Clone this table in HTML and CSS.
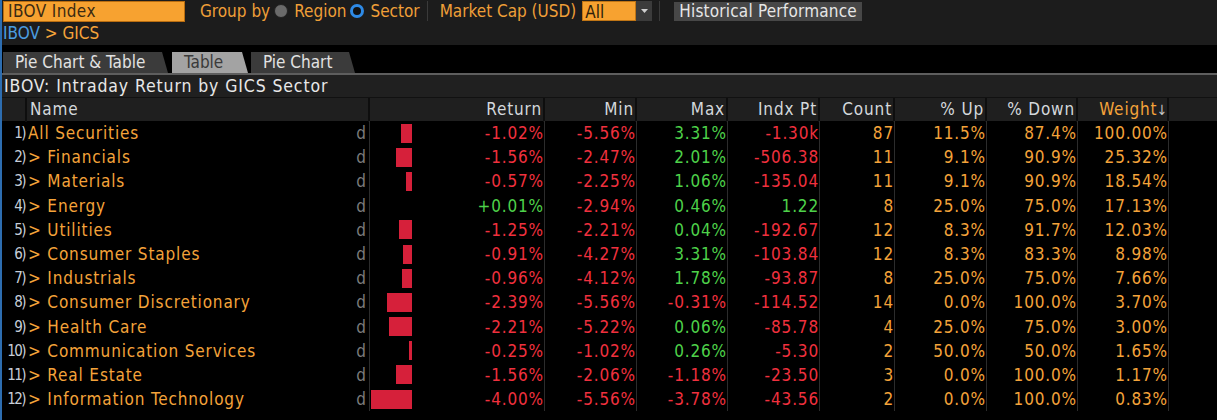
FILE: index.html
```html
<!DOCTYPE html>
<html>
<head>
<meta charset="utf-8">
<link rel="stylesheet" href="styles.css">
</head>
<body>
<div class="page">
  <div class="toolbar">
    <div class="ticker">IBOV Index</div>
    <span class="lbl grp">Group by</span>
    <span class="radio off"></span>
    <span class="lbl">Region</span>
    <span class="radio on"></span>
    <span class="lbl">Sector</span>
    <span class="vsep"></span>
    <span class="lbl">Market Cap (USD)</span>
    <span class="dd"><span class="ddv">All</span><span class="dda"><svg width="7" height="5" viewBox="0 0 7 5"><path d="M0 0h7L3.5 4z" fill="#cfcfcf"/></svg></span></span>
    <span class="vsep"></span>
    <span class="btn">Historical Performance</span>
  </div>
  <div class="crumb"><span class="blue">IBOV</span> <span class="org">&gt; GICS</span></div>
  <div class="band"></div>
  <div class="tabs">
    <div class="tab t1">Pie Chart &amp; Table</div>
    <div class="tab t2 active">Table</div>
    <div class="tab t3">Pie Chart</div>
  </div>
  <div class="title">IBOV: Intraday Return by GICS Sector</div>
  <div class="grid head">
    <div class="c"></div>
    <div class="c name">Name</div>
    <div class="c r">Return</div>
    <div class="c r">Min</div>
    <div class="c r">Max</div>
    <div class="c r">Indx Pt</div>
    <div class="c r">Count</div>
    <div class="c r">% Up</div>
    <div class="c r">% Down</div>
    <div class="c r wt">Weight<span class="arr">↓</span></div>
    <div class="c"></div>
  </div>
  <div class="body" id="rows"></div>
</div>
<script src="app.js"></script>
</body>
</html>
```
FILE: app.js
```js
var data = [
  ["1)","All Securities",false,-1.02,"-1.02%","-5.56%","3.31%","-1.30k","87","11.5%","87.4%","100.00%"],
  ["2)","Financials",true,-1.56,"-1.56%","-2.47%","2.01%","-506.38","11","9.1%","90.9%","25.32%"],
  ["3)","Materials",true,-0.57,"-0.57%","-2.25%","1.06%","-135.04","11","9.1%","90.9%","18.54%"],
  ["4)","Energy",true,0.01,"+0.01%","-2.94%","0.46%","1.22","8","25.0%","75.0%","17.13%"],
  ["5)","Utilities",true,-1.25,"-1.25%","-2.21%","0.04%","-192.67","12","8.3%","91.7%","12.03%"],
  ["6)","Consumer Staples",true,-0.91,"-0.91%","-4.27%","3.31%","-103.84","12","8.3%","83.3%","8.98%"],
  ["7)","Industrials",true,-0.96,"-0.96%","-4.12%","1.78%","-93.87","8","25.0%","75.0%","7.66%"],
  ["8)","Consumer Discretionary",true,-2.39,"-2.39%","-5.56%","-0.31%","-114.52","14","0.0%","100.0%","3.70%"],
  ["9)","Health Care",true,-2.21,"-2.21%","-5.22%","0.06%","-85.78","4","25.0%","75.0%","3.00%"],
  ["10)","Communication Services",true,-0.25,"-0.25%","-1.02%","0.26%","-5.30","2","50.0%","50.0%","1.65%"],
  ["11)","Real Estate",true,-1.56,"-1.56%","-2.06%","-1.18%","-23.50","3","0.0%","100.0%","1.17%"],
  ["12)","Information Technology",true,-4.00,"-4.00%","-5.56%","-3.78%","-43.56","2","0.0%","100.0%","0.83%"]
];
function cls(s){ return s.charAt(0) === "-" ? "neg" : "pos"; }
var html = "";
data.forEach(function(d){
  var w = Math.round(Math.abs(d[3]) * 10.3);
  if (Math.abs(d[3]) < 0.05) w = 0;
  html += '<div class="grid row">' +
    '<div class="c num">' + d[0] + '</div>' +
    '<div class="c name"><span class="nm">' + (d[2] ? '&gt; ' : '') + d[1] + '</span><span class="dch">d</span></div>' +
    '<div class="c ret"><span class="barbox"><span class="bar" style="width:' + w + 'px"></span></span><span class="v ' + cls(d[4]) + '">' + d[4] + '</span></div>' +
    '<div class="c r ' + cls(d[5]) + '">' + d[5] + '</div>' +
    '<div class="c r ' + cls(d[6]) + '">' + d[6] + '</div>' +
    '<div class="c r ' + cls(d[7]) + '">' + d[7] + '</div>' +
    '<div class="c r org">' + d[8] + '</div>' +
    '<div class="c r org">' + d[9] + '</div>' +
    '<div class="c r org">' + d[10] + '</div>' +
    '<div class="c r org">' + d[11] + '</div>' +
    '<div class="c last"></div>' +
    '</div>';
});
document.getElementById("rows").innerHTML = html;
```
FILE: styles.css
```css
html, body {
  margin: 0;
  padding: 0;
  background: #000;
  width: 1217px;
  height: 420px;
  overflow: hidden;
}
body {
  font-family: "DejaVu Sans Condensed", "DejaVu Sans", sans-serif;
  font-size: 17px;
  color: #f4a33a;
}
.page {
  border-left: 2px solid #2d6db0;
  height: 420px;
  box-sizing: border-box;
}
.toolbar {
  height: 22px;
  background: #1c1c1c;
  display: flex;
  align-items: center;
}
.ticker {
  margin-left: 1px;
  width: 176px;
  height: 19px;
  line-height: 19px;
  background: #f7a230;
  border: 1px solid #b96d10;
  color: #3b2a12;
  padding-left: 4px;
  box-sizing: content-box;
  letter-spacing: 0.4px;
}
.lbl { color: #ef9f38; white-space: nowrap; }
.grp { margin-left: 15px; }
.radio {
  width: 14px;
  height: 14px;
  border-radius: 50%;
  box-sizing: border-box;
  margin: 0 6px 0 4px;
}
.radio.off { background: #6a6a6a; border: 1px solid #222; }
.radio.on { background: #111; border: 3px solid #2e8ae6; }
.vsep {
  width: 1px;
  height: 20px;
  background: #3a3a3a;
  margin: 0 12px 0 7px;
}
.dd { display: flex; margin-left: 6px; height: 20px; }
.ddv {
  width: 54px;
  background: #f7a230;
  color: #2e1f0a;
  line-height: 20px;
  padding-left: 2px;
  border: 1px solid #c07515;
  box-sizing: border-box;
}
.dda {
  width: 16px;
  background: #3b3b3b;
  display: flex;
  align-items: center;
  justify-content: center;
}
.btn {
  margin-left: 2px;
  background: #474747;
  color: #e6e6e6;
  height: 19px;
  line-height: 19px;
  padding: 0 5px;
  white-space: nowrap;
  letter-spacing: 0.2px;
}
.crumb {
  height: 23px;
  line-height: 22px;
  background: #1c1c1c;
  padding-left: 1px;
}
.blue { color: #4b9de0; }
.org { color: #f4a33a; }
.band { height: 7px; background: #000; }
.tabs {
  height: 21px;
  display: flex;
  border-bottom: 2px solid #5e5e5e;
  background: #000;
}
.tab {
  height: 21px;
  line-height: 21px;
  background: #3b3b3b;
  color: #e2e2e2;
  clip-path: polygon(0 0, calc(100% - 6px) 0, 100% 100%, 0 100%);
  box-sizing: border-box;
}
.t1 { margin-left: 1px; width: 165px; padding-left: 12px; }
.t2 { margin-left: 4px; width: 76px; padding-left: 12px; }
.t3 { margin-left: 3px; width: 104px; padding-left: 12px; }
.tab.active { background: #a3a3a3; color: #3a3a3a; }
.title {
  height: 22px;
  line-height: 22px;
  background: #202020;
  color: #e8e8e8;
  padding-left: 2px;
  border-bottom: 1px solid #111;
  font-size: 17.5px;
  letter-spacing: 0.88px;
}
.grid {
  display: grid;
  grid-template-columns: 25px 343px 175px 92px 91px 92px 75px 92px 91px 91px 1fr;
  letter-spacing: 0.85px;
}
.head {
  height: 23px;
  background: #1f1f1f;
  color: #d4d8dc;
  line-height: 23px;
}
.head .c { border-right: 2px solid #0e0e0e; padding-right: 1px; }
.head .c:last-child { border-right: none; }
.head .name { padding-left: 3px; }
.r { text-align: right; }
.head .wt { color: #f4a33a; padding-right: 0; }
.arr { color: #c8c8c8; font-size: 14px; margin-left: -1px; letter-spacing: 0; }
.row {
  height: 24.2px;
  line-height: 24px;
}
.row .c {
  border-right: 1px solid #2c2c2c;
  padding-right: 0;
  white-space: nowrap;
  overflow: hidden;
}
.row .num {
  border-right: none;
  font-size: 15px;
  color: #c6ced8;
  text-align: right;
  padding-right: 2px;
  letter-spacing: -1.6px;
}
.row .name {
  display: flex;
  justify-content: space-between;
  padding-left: 1px;
  padding-right: 3px;
}
.nm { color: #f4a33a; }
.dch { color: #7b7b7b; letter-spacing: 0; }
.ret {
  display: flex;
  align-items: center;
  justify-content: space-between;
}
.barbox {
  width: 42px;
  height: 19px;
  display: flex;
  justify-content: flex-end;
}
.bar { background: #d6203a; height: 19px; }
.neg { color: #f0303e; }
.pos { color: #4ed24a; }
.row .last { border-right: none; }
```
